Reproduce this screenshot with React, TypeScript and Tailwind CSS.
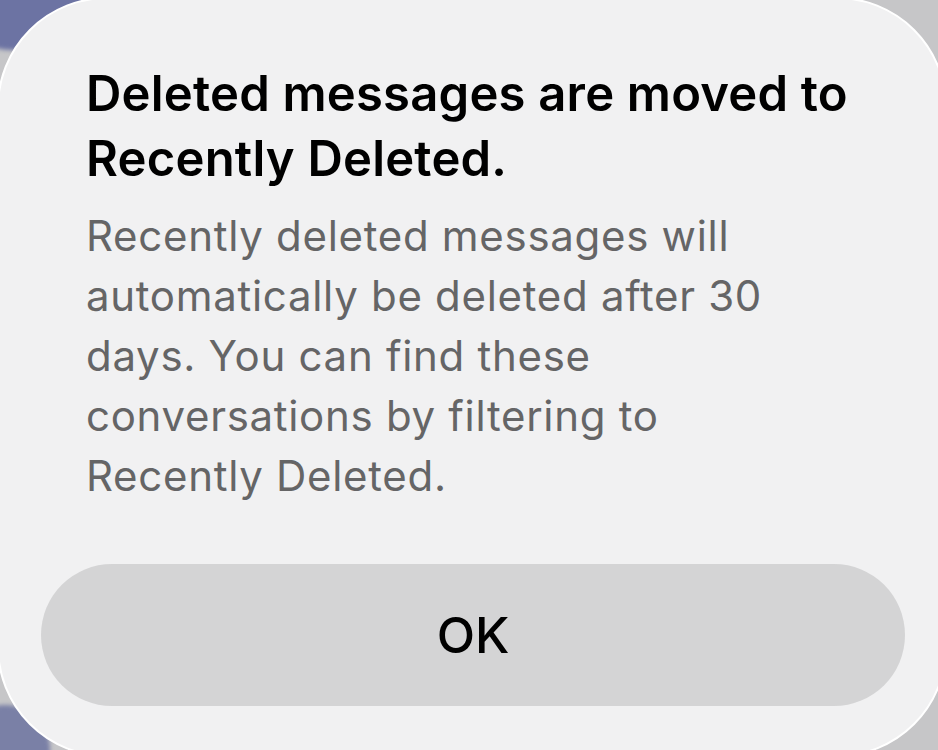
export default function App() {
  return (
    <div className="relative w-[938px] h-[750px] overflow-hidden bg-[#c6c6c8]" style={{ fontFamily: "Inter, 'Noto Sans', sans-serif" }}>
      {/* blurred background bits peeking out behind the alert */}
      <div className="absolute -left-[40px] -top-[50px] w-[130px] h-[100px] rounded-full bg-[#6c73a3] blur-[2px]" />
      <div className="absolute -left-[40px] top-[705px] w-[90px] h-[90px] rounded-full bg-[#7a80a6] blur-[2px]" />

      <div className="relative -ml-[3px] -mt-[3px] w-[950px] h-[760px] rounded-[110px] border-2 border-white bg-[#f1f1f2] pl-[87px] pr-[40px] pt-[62px]">
        <h1 className="pr-[40px] text-[49px] leading-[65px] font-semibold text-black tracking-[0.2px]">
          Deleted messages are moved to Recently Deleted.
        </h1>
        <p className="mt-[15px] pr-[100px] text-[42px] leading-[60px] text-[#656566] tracking-[0.7px]">
          Recently deleted messages will automatically be deleted after 30 days. You can find these conversations by filtering to Recently Deleted.
        </p>
        <div className="-ml-[45px] mt-[58px] h-[142px] rounded-full bg-[#d4d4d5] flex items-center justify-center">
          <span className="text-[50px] font-medium text-black">OK</span>
        </div>
      </div>
    </div>
  );
}
